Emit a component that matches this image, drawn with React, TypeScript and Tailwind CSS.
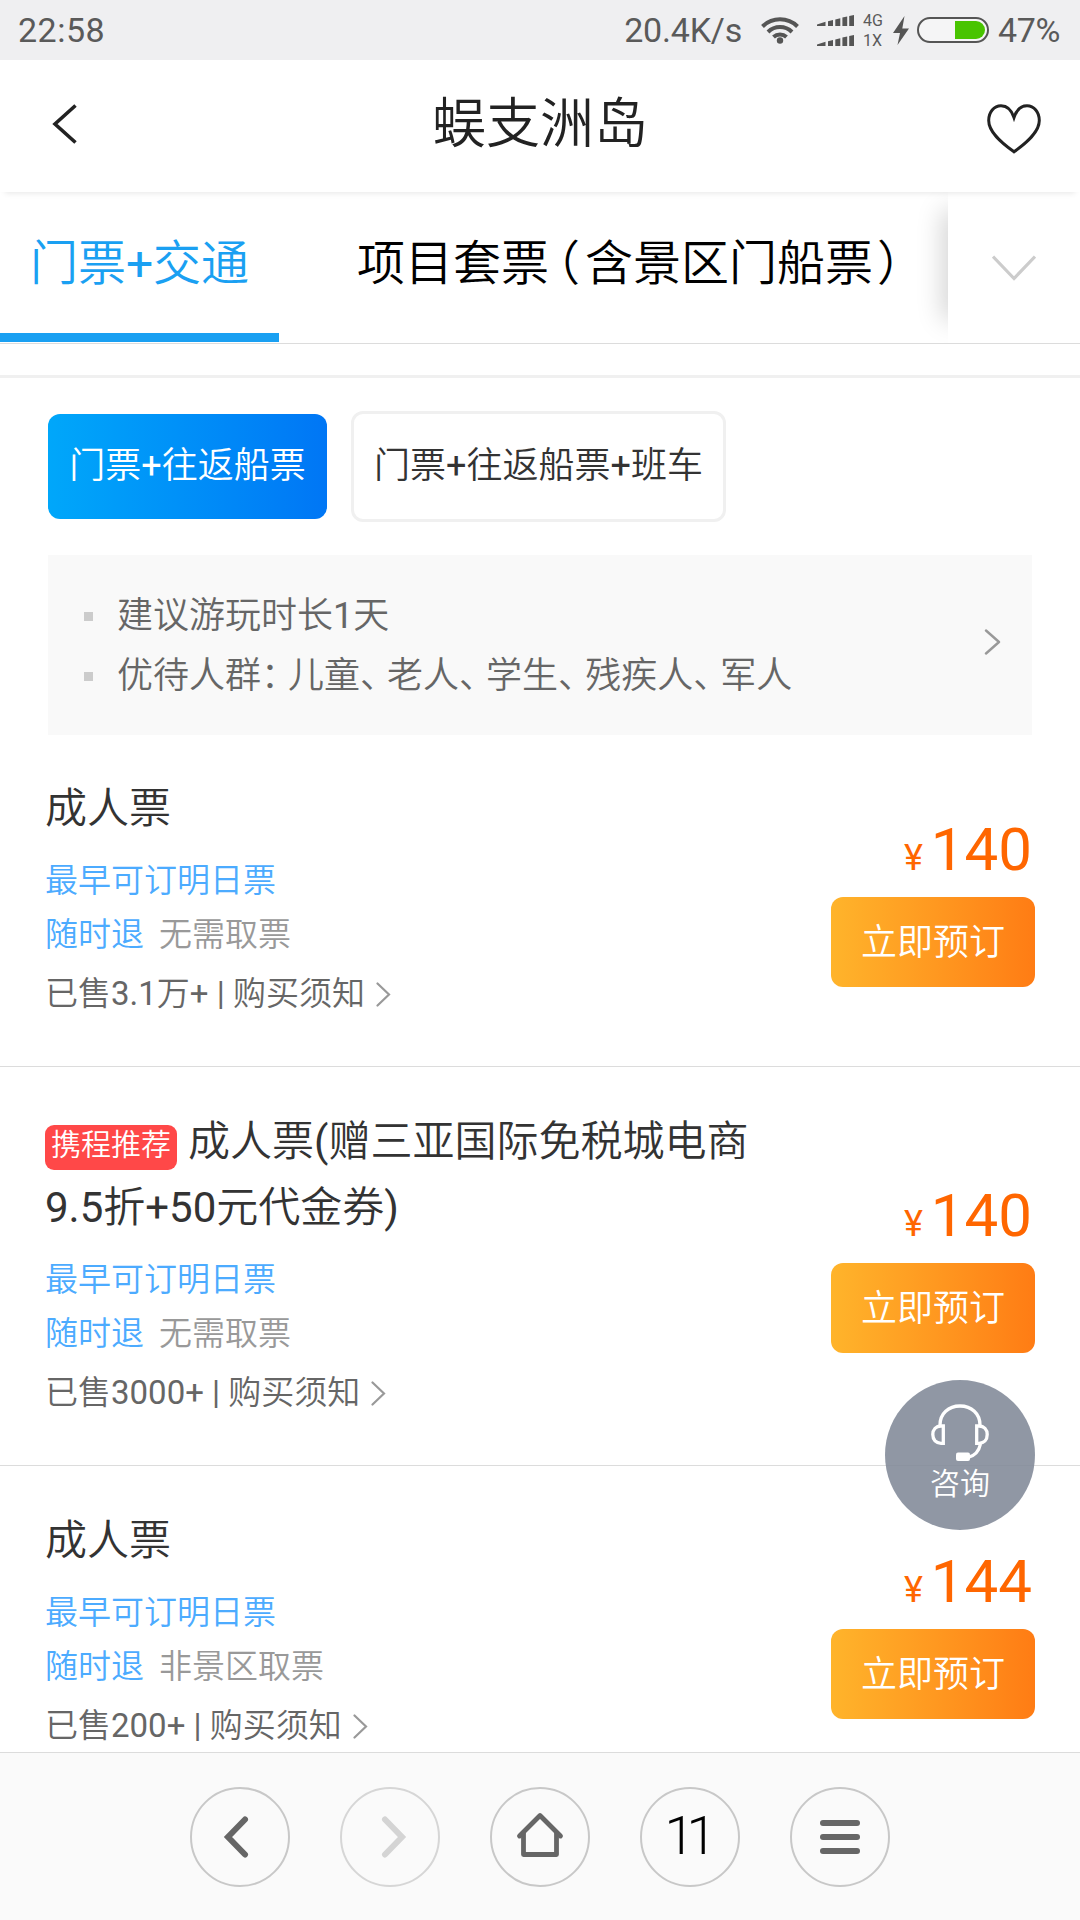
import React from "react";

type Ticket = {
  recommended?: boolean;
  title: string[];
  pickup: string;
  sold: string;
  price: string;
};

const tickets: Ticket[] = [
  { title: ["成人票"], pickup: "无需取票", sold: "3.1万+", price: "140" },
  {
    recommended: true,
    title: ["成人票(赠三亚国际免税城电商", "9.5折+50元代金券)"],
    pickup: "无需取票",
    sold: "3000+",
    price: "140",
  },
  { title: ["成人票"], pickup: "非景区取票", sold: "200+", price: "144" },
];

const groups = ["儿童", "老人", "学生", "残疾人"];

function SignalBars() {
  return (
    <svg width="37" height="11" viewBox="0 0 37 11" fill="#555">
      <path d="M0 11V9.6L8.5 6.8V11ZM11 6.2L16 5V11H11ZM18.3 4.4L23.3 3.2V11H18.3ZM25.4 2.6L30.2 1.5V11H25.4ZM32.2 1L37 0V11H32.2Z" />
    </svg>
  );
}

function StatusBar() {
  return (
    <div className="flex h-[60px] shrink-0 items-center bg-[#efeff1] pr-[18px] pl-[18px] text-[34px] leading-[60px] text-[#5a5a5a]">
      <span className="w-[90px] tracking-[0.5px]">22:58</span>
      <span className="ml-auto tracking-[-0.2px]">20.4K/s</span>
      <svg className="ml-[19px]" width="38" height="28" viewBox="0 0 38 28" fill="none" stroke="#555" strokeWidth="4">
        <path d="M1.5 10.5A25 25 0 0 1 36.5 10.5" />
        <path d="M7 16A17 17 0 0 1 31 16" />
        <path d="M12.5 21A9.5 9.5 0 0 1 25.500 21" />
        <circle cx="19" cy="24.5" r="3.2" fill="#555" stroke="none" />
      </svg>
      <div className="ml-[18px] flex flex-col gap-[9px]">
        <SignalBars />
        <SignalBars />
      </div>
      <div className="ml-[9px] flex w-[22px] flex-col pt-px text-[16px] leading-[20px]">
        <span>4G</span>
        <span>1X</span>
      </div>
      <svg className="ml-[8px]" width="16" height="29" viewBox="0 0 16 29" fill="#555">
        <path d="M11.500 0L0 17H7L4.500 29L16 12.500H9.300Z" />
      </svg>
      <svg className="ml-[8px]" width="72" height="26" viewBox="0 0 72 26">
        <rect x="1" y="1" width="70" height="24" rx="12" fill="#f5f5f6" stroke="#555" strokeWidth="2" />
        <path d="M38 4H59A9 9 0 0 1 59 22H38Z" fill="#48c400" />
      </svg>
      <span className="ml-[9px] w-[64px] tracking-[-0.3px]">47%</span>
    </div>
  );
}

function Header() {
  return (
    <div className="z-10 flex h-[132px] shrink-0 items-center bg-white pr-[39px] pl-[52px] shadow-[0_6px_6px_-5px_rgba(0,0,0,0.1)]">
      <svg className="-mt-[4px]" width="26" height="40" viewBox="0 0 26 40" fill="none" stroke="#222" strokeWidth="3.600">
        <path d="M23.500 1.500L3 20L23.500 38.500" />
      </svg>
      <h1 className="flex-1 pl-[15px] text-center text-[54px] leading-[132px] text-[#222]">
        <span className="relative -top-[1px]">蜈支洲岛</span>
      </h1>
      <svg className="mt-[5px]" width="54" height="50" viewBox="0 0 54 50" fill="none" stroke="#222" strokeWidth="3">
        <path d="M27 13.500C24.500 6 19.500 1.800 14 1.800C7 1.800 1.700 8 1.700 16.500C1.700 28 14 38.500 27 47.800C40 38.500 52.300 28 52.300 16.500C52.300 8 47 1.800 40 1.800C34.500 1.800 29.500 6 27 13.500Z" />
      </svg>
    </div>
  );
}

function Tabs() {
  return (
    <div className="flex h-[152px] shrink-0 border-b border-[#dcdcdc] text-[48px] leading-[144px]">
      <div className="relative flex w-[948px] overflow-hidden">
        <div className="flex h-[150px] w-[279px] justify-center border-b-[9px] border-[#1aa0f2] text-[#1aa0f2]">门票+交通</div>
        <div className="ml-[78px] whitespace-nowrap text-black">
          项目套票<span className="mr-[5px] ml-[7px] [font-feature-settings:'halt']">（</span>含景区门船票
          <span className="ml-[4px] [font-feature-settings:'halt']">）</span>
        </div>
        <div className="absolute top-[24px] -right-[20px] h-[98px] w-[20px] shadow-[0_0_26px_6px_rgba(0,0,0,0.17)]" />
      </div>
      <div className="flex w-[132px] items-center pl-[44px]">
        <svg className="mt-[2px]" width="44" height="28" viewBox="0 0 44 28" fill="none" stroke="#ccc" strokeWidth="3.200">
          <path d="M1 1.500L22 23.500L43 1.500" />
        </svg>
      </div>
    </div>
  );
}

function Chips() {
  return (
    <div className="flex h-[111px] items-center gap-6 pl-12 text-[36px]">
      <div className="h-[105px] w-[279px] rounded-[12px] bg-linear-to-r from-[#00a7fa] to-[#0076f5] text-center leading-[105px] whitespace-nowrap text-white">
        门票+往返船票
      </div>
      <div className="h-[111px] w-[375px] rounded-[12px] border-[3px] border-[#f0f0f0] text-center leading-[105px] whitespace-nowrap text-[#333]">
        门票+往返船票+班车
      </div>
    </div>
  );
}

function InfoBox() {
  return (
    <div className="mx-12 mt-[33px] flex h-[180px] items-center justify-between bg-[#f9f9f9] pr-[31px] pl-9 text-[36px] leading-[60px] text-[#666]">
      <ul className="pt-[2px]">
        <li className="flex items-center gap-6">
          <i className="size-[9px] bg-[#ccc]" />
          <span>建议游玩时长1天</span>
        </li>
        <li className="flex items-center gap-6">
          <i className="size-[9px] bg-[#ccc]" />
          <span className="whitespace-nowrap">
            优待人群<span className="tracking-[-9px]">：</span>
            {groups.map((g) => (
              <React.Fragment key={g}>
                {g}
                <span className="tracking-[-9px]">、</span>
              </React.Fragment>
            ))}
            军人
          </span>
        </li>
      </ul>
      <svg className="-mt-[7px]" width="17" height="26" viewBox="0 0 17 26" fill="none" stroke="#999" strokeWidth="2.400" strokeLinecap="round" strokeLinejoin="round">
        <path d="M2 1.500L15 13L2 24.500" />
      </svg>
    </div>
  );
}

function TicketRow({ ticket }: { ticket: Ticket }) {
  return (
    <div className="group flex shrink-0 items-center justify-between border-b border-[#dcdcdc] pr-[45px] pl-[45px]">
      <div className="pt-[42px] pb-[40px] whitespace-nowrap group-first:pt-[41px]">
        <h2 className="text-[42px] leading-[66px] text-[#333]">
          {ticket.title.map((line, i) => (
            <div key={line} className="flex items-center">
              {i === 0 && ticket.recommended && (
                <span className="mt-[11px] mr-[11px] h-[45px] w-[132px] rounded-[9px] bg-[#ff4848] text-center text-[30px] leading-[39px] text-white">
                  携程推荐
                </span>
              )}
              <span>{line}</span>
            </div>
          ))}
        </h2>
        <div className="pt-3 text-[33px] leading-[54px] text-[#4cabff]">
          <div>最早可订明日票</div>
          <div className="flex gap-[15px]">
            <span>随时退</span>
            <span className="text-[#999]">{ticket.pickup}</span>
          </div>
        </div>
        <div className="flex items-center text-[33px] leading-[64px] text-[#666]">
          <span>已售{ticket.sold} | 购买须知</span>
          <svg className="ml-[11px]" width="15" height="25" viewBox="0 0 15 25" fill="none" stroke="#999" strokeWidth="2.200" strokeLinecap="round">
            <path d="M1.500 1.500L13 12.500L1.500 23.500" />
          </svg>
        </div>
      </div>
      <div className="flex flex-col items-end">
        <div className="mr-[3px] flex h-[83px] items-baseline text-[#ff6600]">
          <span className="mr-[8px] text-[36px]">¥</span>
          <span className="text-[60px] leading-[71px]">{ticket.price}</span>
        </div>
        <button className="h-[90px] w-[204px] rounded-[12px] bg-linear-to-r from-[#ffb42b] to-[#ff7c14] pt-px text-center text-[36px] leading-[90px] text-white">
          立即预订
        </button>
      </div>
    </div>
  );
}

function Consult() {
  return (
    <div className="absolute top-[1380px] left-[885px] flex size-[150px] flex-col items-center rounded-full bg-[rgba(128,136,150,0.87)] pt-[24px] text-white">
      <svg width="58" height="58" viewBox="0 0 58 58" fill="none" stroke="#fff" strokeWidth="3.300">
        <path d="M9 21C9 9.500 17.500 2 29 2S49 9.500 49 21" />
        <path d="M12.300 22V39.300H10C5 39.300 1.800 36 1.800 30.600S5 22 10 22Z" />
        <path d="M45.700 22V39.300H48C53 39.300 56.200 36 56.200 30.600S53 22 48 22Z" />
        <path d="M49.500 40C48 47 43 52 37 53.500" />
        <rect x="25" y="48.500" width="14" height="8.500" rx="2" fill="#fff" stroke="none" />
      </svg>
      <span className="text-[30px] leading-[44px]">咨询</span>
    </div>
  );
}

function NavButton({ dim, children }: { dim?: boolean; children: React.ReactNode }) {
  return (
    <div
      className={
        dim
          ? "flex size-[100px] items-center justify-center rounded-full border-2 border-[#d6d6d6]"
          : "flex size-[100px] items-center justify-center rounded-full border-2 border-[#c8c8c8]"
      }
    >
      {children}
    </div>
  );
}

function BottomNav() {
  return (
    <div className="flex h-[168px] shrink-0 items-center justify-center gap-[50px] border-t border-[#dcdcdc] bg-[#fafafa]">
      <NavButton>
        <svg className="mr-[8px]" width="26" height="42" viewBox="0 0 26 42" fill="none" stroke="#666" strokeWidth="6" strokeLinecap="round">
          <path d="M22 3.500L5 21L22 38.500" />
        </svg>
      </NavButton>
      <NavButton dim>
        <svg className="ml-[8px]" width="26" height="42" viewBox="0 0 26 42" fill="none" stroke="#d4d4d4" strokeWidth="6" strokeLinecap="round">
          <path d="M4 3.500L21 21L4 38.500" />
        </svg>
      </NavButton>
      <NavButton>
        <svg className="-mt-[3px]" width="48" height="46" viewBox="0 0 48 46" fill="none" stroke="#666" strokeWidth="4.800" strokeLinecap="round" strokeLinejoin="round">
          <path d="M3.500 24L24 3.500L44.500 24" />
          <path d="M7.500 21V42.500H40.500V21" />
        </svg>
      </NavButton>
      <NavButton>
        <span className="mr-[7px] -mt-[2px] text-[54px] leading-none font-light tracking-[-8px] text-black">11</span>
      </NavButton>
      <NavButton>
        <div className="flex flex-col gap-2">
          <i className="h-[6px] w-10 rounded-full bg-[#666]" />
          <i className="h-[6px] w-10 rounded-full bg-[#666]" />
          <i className="h-[6px] w-10 rounded-full bg-[#666]" />
        </div>
      </NavButton>
    </div>
  );
}

export default function App() {
  return (
    <div className="relative flex h-[1920px] w-[1080px] flex-col overflow-hidden bg-white font-['Roboto','Noto_Sans_CJK_SC_DemiLight','Noto_Sans_CJK_SC',sans-serif] font-normal">
      <StatusBar />
      <Header />
      <Tabs />
      <main className="flex min-h-0 flex-1 flex-col overflow-hidden">
        <div className="mt-[31px] mb-[33px] h-[3px] shrink-0 bg-[#f0f0f0]" />
        <div className="shrink-0">
          <Chips />
          <InfoBox />
        </div>
        <div className="flex flex-col">
          {tickets.map((t) => (
            <TicketRow key={t.sold} ticket={t} />
          ))}
        </div>
      </main>
      <BottomNav />
      <Consult />
    </div>
  );
}
